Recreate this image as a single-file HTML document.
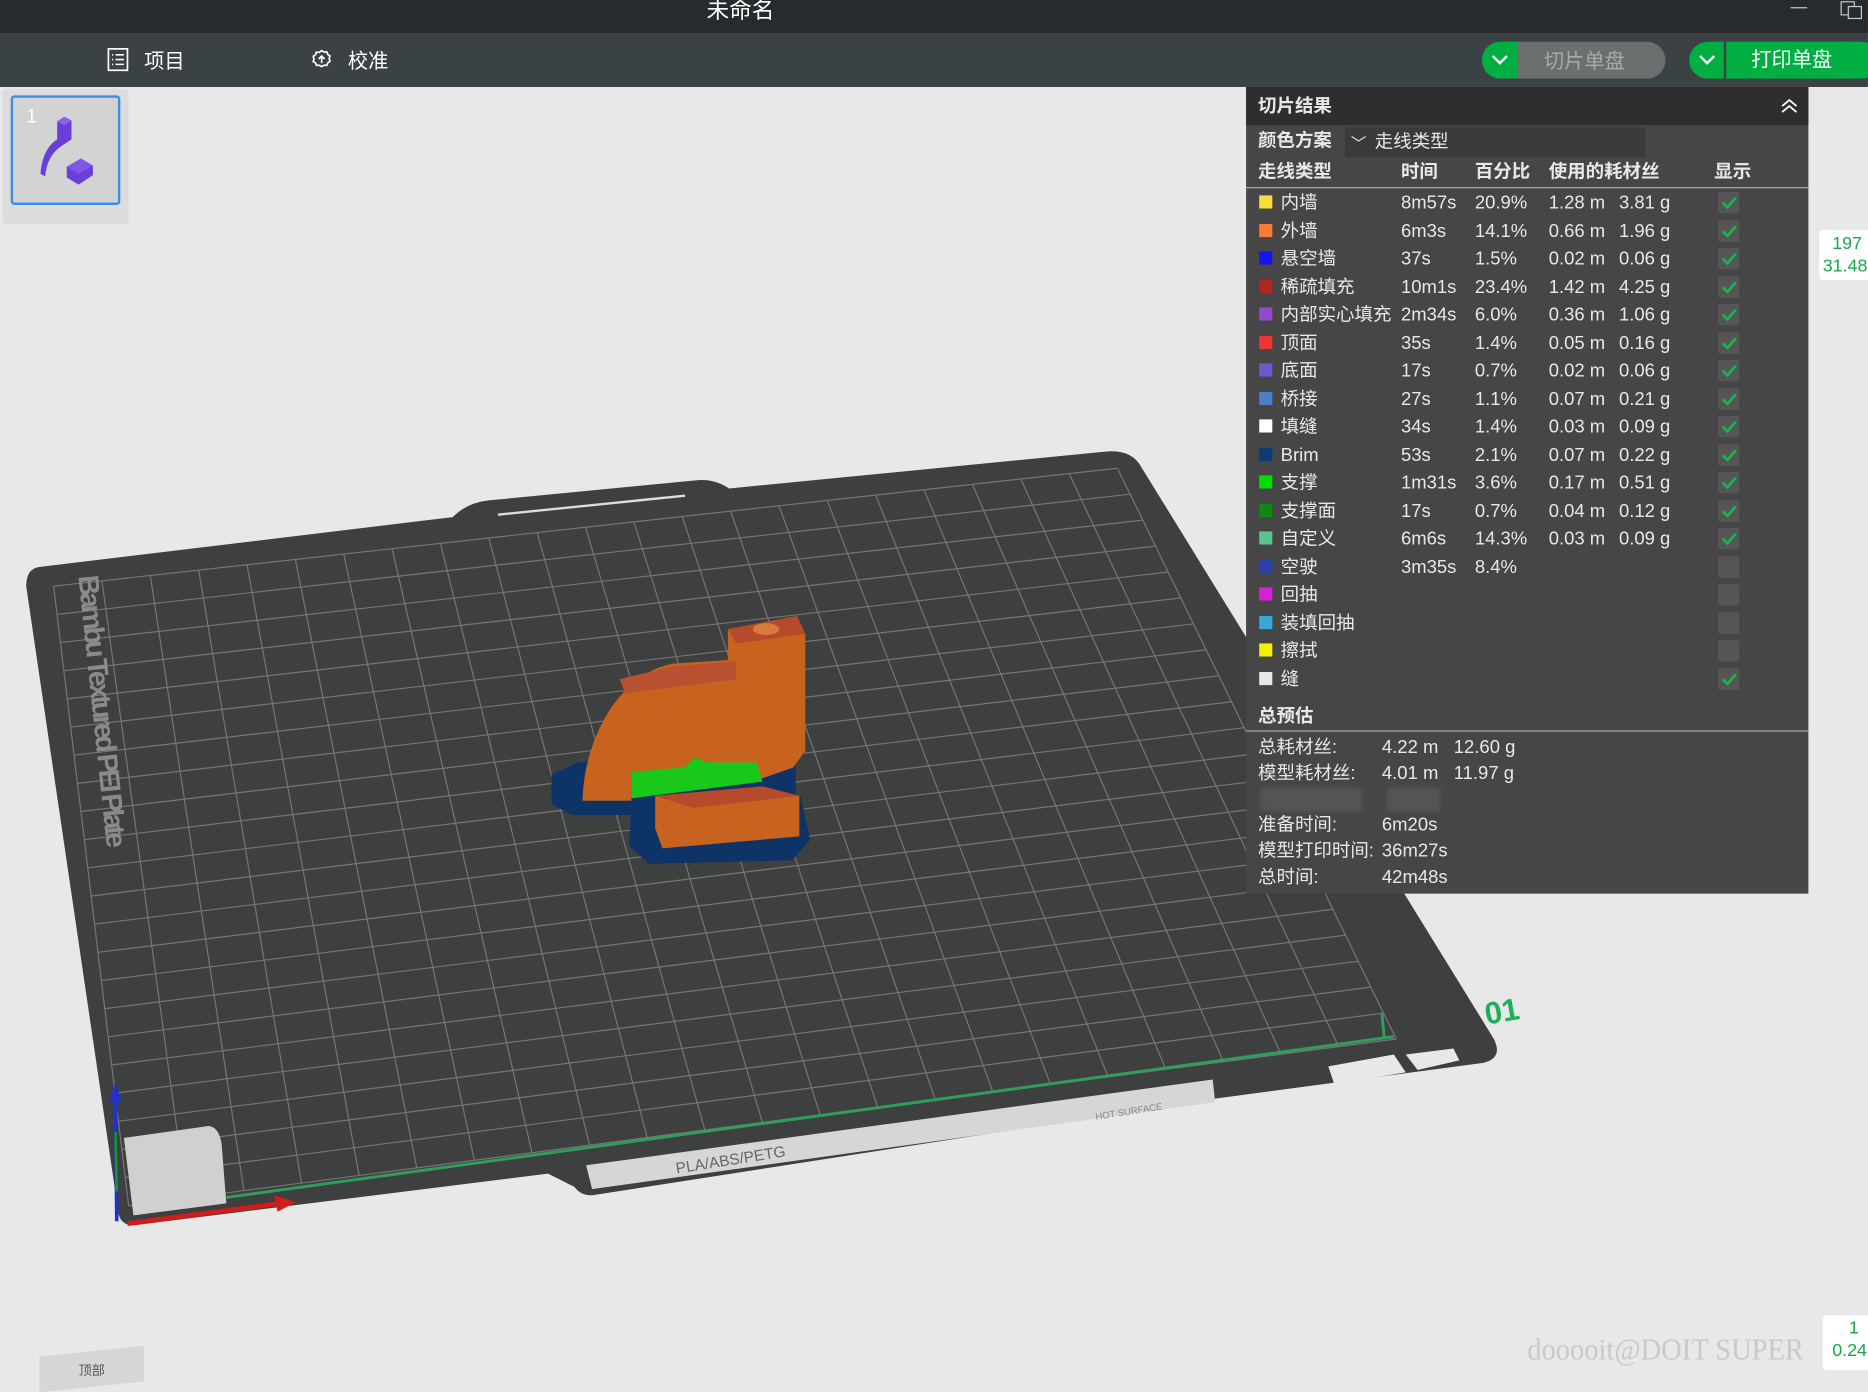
<!DOCTYPE html>
<html><head><meta charset="utf-8">
<style>
html,body{margin:0;padding:0;width:1868px;height:1375px;overflow:hidden;background:#e8e8e8}
#w{position:absolute;left:0;top:0;width:1568px;height:1154px;transform:scale(1.1913,1.1915);transform-origin:0 0;font-family:"Liberation Sans","Noto Sans CJK SC",sans-serif;background:#e8e8e8}
.a{position:absolute;white-space:nowrap}
#panel{position:absolute;left:1046px;top:73px;width:472px;height:677px;background:#464646;color:#e8e8e8;font-size:15.5px}
#panel .a{line-height:20px}
.sw{position:absolute;width:11px;height:11px}
.ck{position:absolute;width:18px;height:18px;background:#555;border-radius:2px}
.ck svg{position:absolute;left:2px;top:2px}
</style></head><body><div id="w">
<div class="a" style="left:0;top:0;width:1568px;height:27px;background:#262b2e"></div>
<div class="a" style="left:593px;top:-6px;color:#fff;font-size:19px">未命名</div>
<div class="a" style="left:1503px;top:6px;width:14px;height:1px;background:#ccc"></div>
<div class="a" style="left:1545px;top:1px;width:10px;height:10px;border:1px solid #ccc"></div>
<div class="a" style="left:1551px;top:5px;width:10px;height:9px;border:1px solid #ccc;background:#262b2e"></div>
<div class="a" style="left:0;top:27px;width:1568px;height:1px;background:#111"></div>
<div class="a" style="left:0;top:28px;width:1568px;height:45px;background:#3b4245"></div>
<svg class="a" style="left:89px;top:40px" width="20" height="20" viewBox="0 0 20 20"><rect x="2" y="1" width="16" height="18" fill="none" stroke="#fff" stroke-width="1.4"/><path d="M5 6h1M8 6h7M5 10h1M8 10h7M5 14h1M8 14h7" stroke="#fff" stroke-width="1.3"/></svg>
<div class="a" style="left:121px;top:37px;color:#fff;font-size:17px">项目</div>
<svg class="a" style="left:261px;top:41px" width="18" height="18" viewBox="0 0 18 18"><path d="M9 1.5l2 1.2 2.3-.2.8 2.1 1.9 1.4-.7 2.2.7 2.2-1.9 1.4-.8 2.1-2.3-.2-2 1.2-2-1.2-2.3.2-.8-2.1L1.9 10.7l.7-2.2-.7-2.2 1.9-1.4.8-2.1 2.3.2z" fill="none" stroke="#fff" stroke-width="1.4"/><path d="M9 6v6M6.5 8.5L9 6l2.5 2.5" stroke="#fff" stroke-width="1.4" fill="none"/></svg>
<div class="a" style="left:292px;top:37px;color:#fff;font-size:17px">校准</div>
<div class="a" style="left:1244px;top:35px;width:154px;height:31px;border-radius:16px;background:#6b6f70;overflow:hidden"><div style="position:absolute;left:0;top:0;width:30px;height:31px;background:#00ae42"></div></div>
<svg class="a" style="left:1251px;top:44px" width="16" height="12"><path d="M2 3l6 6 6-6" stroke="#fff" stroke-width="2" fill="none"/></svg>
<div class="a" style="left:1296px;top:37px;color:#a9abab;font-size:17px">切片单盘</div>
<div class="a" style="left:1418px;top:35px;width:160px;height:31px;border-radius:16px;background:#00ae42"></div>
<div class="a" style="left:1447px;top:35px;width:2px;height:31px;background:#3b4245"></div>
<svg class="a" style="left:1425px;top:44px" width="16" height="12"><path d="M2 3l6 6 6-6" stroke="#fff" stroke-width="2" fill="none"/></svg>
<div class="a" style="left:1470px;top:36px;color:#fff;font-size:17px">打印单盘</div>

<div class="a" style="left:2px;top:75px;width:106px;height:113px;background:#dcdcdc;border-radius:3px"></div>
<div class="a" style="left:9px;top:80px;width:88px;height:88px;background:#d3d3d3;border:2px solid #3a8fe0;border-radius:3px"></div>
<div class="a" style="left:22px;top:90px;color:#fff;font-size:16px">1</div>
<svg class="a" style="left:20px;top:90px" width="65" height="70" viewBox="0 0 65 70"><path d="M28 12l6-4 6 3v16l-6 4c-10 6-15 15-16 27l-4-2c1-14 6-24 14-29z" fill="#6a3fd8"/><path d="M34 8l6 3-6 4-6-3z" fill="#8a62ee"/><path d="M36 50l12-7 10 6v8l-12 8-10-6z" fill="#6a3fd8"/><path d="M36 50l12-7 10 6-12 7z" fill="#7f55ea"/></svg>

<svg class="a" style="left:0;top:0" width="1568" height="1154" id="bed">
<path d="M32 476 L380 434 Q392 422 410 420 L586 403 Q600 402 612 410 L928 379 Q950 377 958 392 L1254 872 Q1262 888 1245 892 L1148 905 L1020 922 L498 1003 Q488 1004 482 996 L460 985 L115 1028 Q100 1030 99 1015 L22 492 Q22 478 32 476z" fill="#3e3f3f"/>
<g id="grid" stroke="#767676" stroke-width="1"></g>
<path d="M418 432 L575 416" stroke="#ddd" stroke-width="2"/>
<path d="M190 1005 L1170 870 M1160 850 L1162 872" stroke="#2e9d5e" stroke-width="2.5"/>
<path d="M104 955 L175 945 Q184 946 186 960 L190 1010 L112 1020z" fill="#d0d0d0"/>
<path d="M492 978 L1018 906 L1020 925 L497 998z" fill="#d6d6d6"/>
<text x="568" y="985" font-size="13" fill="#666" transform="rotate(-9 568 985)" font-family="Liberation Sans">PLA/ABS/PETG</text>
<text x="920" y="940" font-size="8" fill="#888" transform="rotate(-9 920 940)" font-family="Liberation Sans">HOT SURFACE</text>
<path d="M1115 895 L1170 885 L1180 900 L1120 910z M1180 885 L1220 880 L1225 890 L1190 898z" fill="#e8e8e8"/>
<text x="60" y="500" font-size="24" fill="#8a8a8a" font-weight="bold" transform="rotate(84 72 495)" font-family="Liberation Sans" textLength="230">Bambu Textured PEI Plate</text>
<text x="1248" y="860" font-size="26" fill="#1fae5a" font-weight="bold" transform="rotate(-10 1248 860)" font-family="Liberation Sans">01</text>
<path d="M97 920 L98 1025" stroke="#1f2fd0" stroke-width="3"/><path d="M92 925 L97 908 L102 925z" fill="#1f2fd0"/>
<path d="M97 950 L98 1000" stroke="#1a9a2a" stroke-width="2"/>
<path d="M107 1027 L235 1010" stroke="#d01c1c" stroke-width="4"/><path d="M230 1003 L248 1009 L233 1017z" fill="#d01c1c"/>
<path d="M463 650 L485 640 L650 630 L668 640 L668 680 L640 684 L480 684 L463 675z" fill="#0e3366"/>
<path d="M530 676 L560 668 L672 668 L680 705 L665 722 L545 725 L528 710z" fill="#0e3366"/>
<path d="M489 672 C490 620 520 565 565 557 L611 554 L611 528 L669 517 L676 532 L676 630 L666 644 L635 655 L635 647 L530 654 L530 672z" fill="#c8621f"/>
<path d="M611 528 L669 517 L676 532 L618 540z" fill="#b64a2a"/>
<ellipse cx="643" cy="528" rx="11" ry="5" fill="#d87a3a"/>
<path d="M520 570 L566 559 L618 555 L618 570 L555 578 L525 582z" fill="#b95030"/>
<path d="M530 648 L575 644 L583 636 L595 640 L635 640 L640 656 L530 670z" fill="#19c919"/>
<path d="M550 668 L640 660 L671 668 L671 702 L556 712 L550 695z" fill="#c8621f"/>
<path d="M550 668 L640 660 L671 668 L582 678z" fill="#b64a2a"/>
</svg>
<script>
(function(){var g=document.getElementById('grid');var TL=[45,492],TR=[938,393],BR=[1172,872],BL=[108,1012];var n=22,h='';
function L(a,b,t){return [a[0]+(b[0]-a[0])*t,a[1]+(b[1]-a[1])*t]}
for(var i=0;i<=n;i++){var t=i/n;var p=L(TL,TR,t),q=L(BL,BR,t);h+='<line x1="'+p[0]+'" y1="'+p[1]+'" x2="'+q[0]+'" y2="'+q[1]+'"/>';p=L(TL,BL,t);q=L(TR,BR,t);h+='<line x1="'+p[0]+'" y1="'+p[1]+'" x2="'+q[0]+'" y2="'+q[1]+'"/>';}
g.innerHTML=h;})();
</script>

<div id="panel">
<div class="a" style="left:0;top:0;width:472px;height:32px;background:#2e2e2e"></div>
<div class="a" style="left:10px;top:7px;font-weight:bold">切片结果</div>
<svg class="a" style="left:448px;top:9px" width="16" height="14"><path d="M2 7l6-5 6 5M2 12l6-5 6 5" stroke="#fff" stroke-width="1.5" fill="none"/></svg>
<div class="a" style="left:10px;top:36px;font-weight:bold">颜色方案</div>
<div class="a" style="left:83px;top:34px;width:252px;height:25px;background:#3a3a3a;border-radius:2px"></div>
<div class="a" style="left:88px;top:38px;font-size:13px">﹀</div>
<div class="a" style="left:108px;top:37px">走线类型</div>
<div class="a" style="left:10px;top:62px;font-weight:bold">走线类型</div>
<div class="a" style="left:130px;top:62px;font-weight:bold">时间</div>
<div class="a" style="left:192px;top:62px;font-weight:bold">百分比</div>
<div class="a" style="left:254px;top:62px;font-weight:bold">使用的耗材丝</div>
<div class="a" style="left:393px;top:62px;font-weight:bold">显示</div>
<div class="a" style="left:0;top:84px;width:472px;height:1px;background:#aaa"></div>
<div id="rows"></div>
<div class="a" style="left:10px;top:519px;font-weight:bold">总预估</div>
<div class="a" style="left:0;top:540px;width:472px;height:1px;background:#aaa"></div>
<div class="a" style="left:10px;top:545px">总耗材丝:</div><div class="a" style="left:114px;top:545px">4.22 m&nbsp;&nbsp;&nbsp;12.60 g</div>
<div class="a" style="left:10px;top:567px">模型耗材丝:</div><div class="a" style="left:114px;top:567px">4.01 m&nbsp;&nbsp;&nbsp;11.97 g</div>
<div class="a" style="left:12px;top:588px;width:85px;height:20px;background:#555;filter:blur(2px)"></div>
<div class="a" style="left:118px;top:588px;width:45px;height:20px;background:#555;filter:blur(2px)"></div>
<div class="a" style="left:10px;top:610px">准备时间:</div><div class="a" style="left:114px;top:610px">6m20s</div>
<div class="a" style="left:10px;top:632px">模型打印时间:</div><div class="a" style="left:114px;top:632px">36m27s</div>
<div class="a" style="left:10px;top:654px">总时间:</div><div class="a" style="left:114px;top:654px">42m48s</div>
</div>
<script>
(function(){var d=[["#f5de3c","内墙","8m57s","20.9%","1.28 m","3.81 g",1],["#f77b32","外墙","6m3s","14.1%","0.66 m","1.96 g",1],["#1414f5","悬空墙","37s","1.5%","0.02 m","0.06 g",1],["#b02421","稀疏填充","10m1s","23.4%","1.42 m","4.25 g",1],["#9348cf","内部实心填充","2m34s","6.0%","0.36 m","1.06 g",1],["#f03434","顶面","35s","1.4%","0.05 m","0.16 g",1],["#6a5ad0","底面","17s","0.7%","0.02 m","0.06 g",1],["#4a80c8","桥接","27s","1.1%","0.07 m","0.21 g",1],["#ffffff","填缝","34s","1.4%","0.03 m","0.09 g",1],["#0b3c74","Brim","53s","2.1%","0.07 m","0.22 g",1],["#00e000","支撑","1m31s","3.6%","0.17 m","0.51 g",1],["#0a8a10","支撑面","17s","0.7%","0.04 m","0.12 g",1],["#5ac48a","自定义","6m6s","14.3%","0.03 m","0.09 g",1],["#2c3fa8","空驶","3m35s","8.4%","","",0],["#d81ed8","回抽","","","","",0],["#38a8d8","装填回抽","","","","",0],["#f2f200","擦拭","","","","",0],["#e8e8e8","缝","","","","",1]];
var h='';for(var i=0;i<d.length;i++){var y=88+i*23.5,r=d[i];h+='<div class="sw" style="left:11px;top:'+(y+3)+'px;background:'+r[0]+'"></div><div class="a" style="left:29px;top:'+y+'px">'+r[1]+'</div><div class="a" style="left:130px;top:'+y+'px">'+r[2]+'</div><div class="a" style="left:192px;top:'+y+'px">'+r[3]+'</div><div class="a" style="left:254px;top:'+y+'px">'+r[4]+'</div><div class="a" style="left:313px;top:'+y+'px">'+r[5]+'</div><div class="ck" style="left:396px;top:'+(y)+'px">'+(r[6]?'<svg width="14" height="14"><path d="M2 7l4 4 7-8" stroke="#17b84a" stroke-width="2.2" fill="none"/></svg>':'')+'</div>';}
document.getElementById('rows').innerHTML=h;})();
</script>
<div class="a" style="left:1527px;top:193px;width:45px;height:42px;background:#fff;border-radius:3px"></div>
<div class="a" style="left:1538px;top:196px;color:#18a84a;font-size:15px">197</div>
<div class="a" style="left:1530px;top:215px;color:#18a84a;font-size:15px">31.48</div>
<div class="a" style="left:1530px;top:1104px;width:42px;height:46px;background:#fff;border-radius:3px"></div>
<div class="a" style="left:1552px;top:1106px;color:#18a84a;font-size:15px">1</div>
<div class="a" style="left:1538px;top:1125px;color:#18a84a;font-size:15px">0.24</div>
<div class="a" style="left:1282px;top:1118px;color:#c9c9c9;font-size:26px;font-family:'Liberation Serif',serif;transform:scaleX(0.92);transform-origin:0 0">dooooit@DOIT SUPER</div>
<div class="a" style="left:33px;top:1134px;width:88px;height:30px;background:#d6d6d6;transform:skewY(-6deg)"></div>
<div class="a" style="left:66px;top:1142px;color:#555;font-size:11px">顶部</div>
</div></body></html>
